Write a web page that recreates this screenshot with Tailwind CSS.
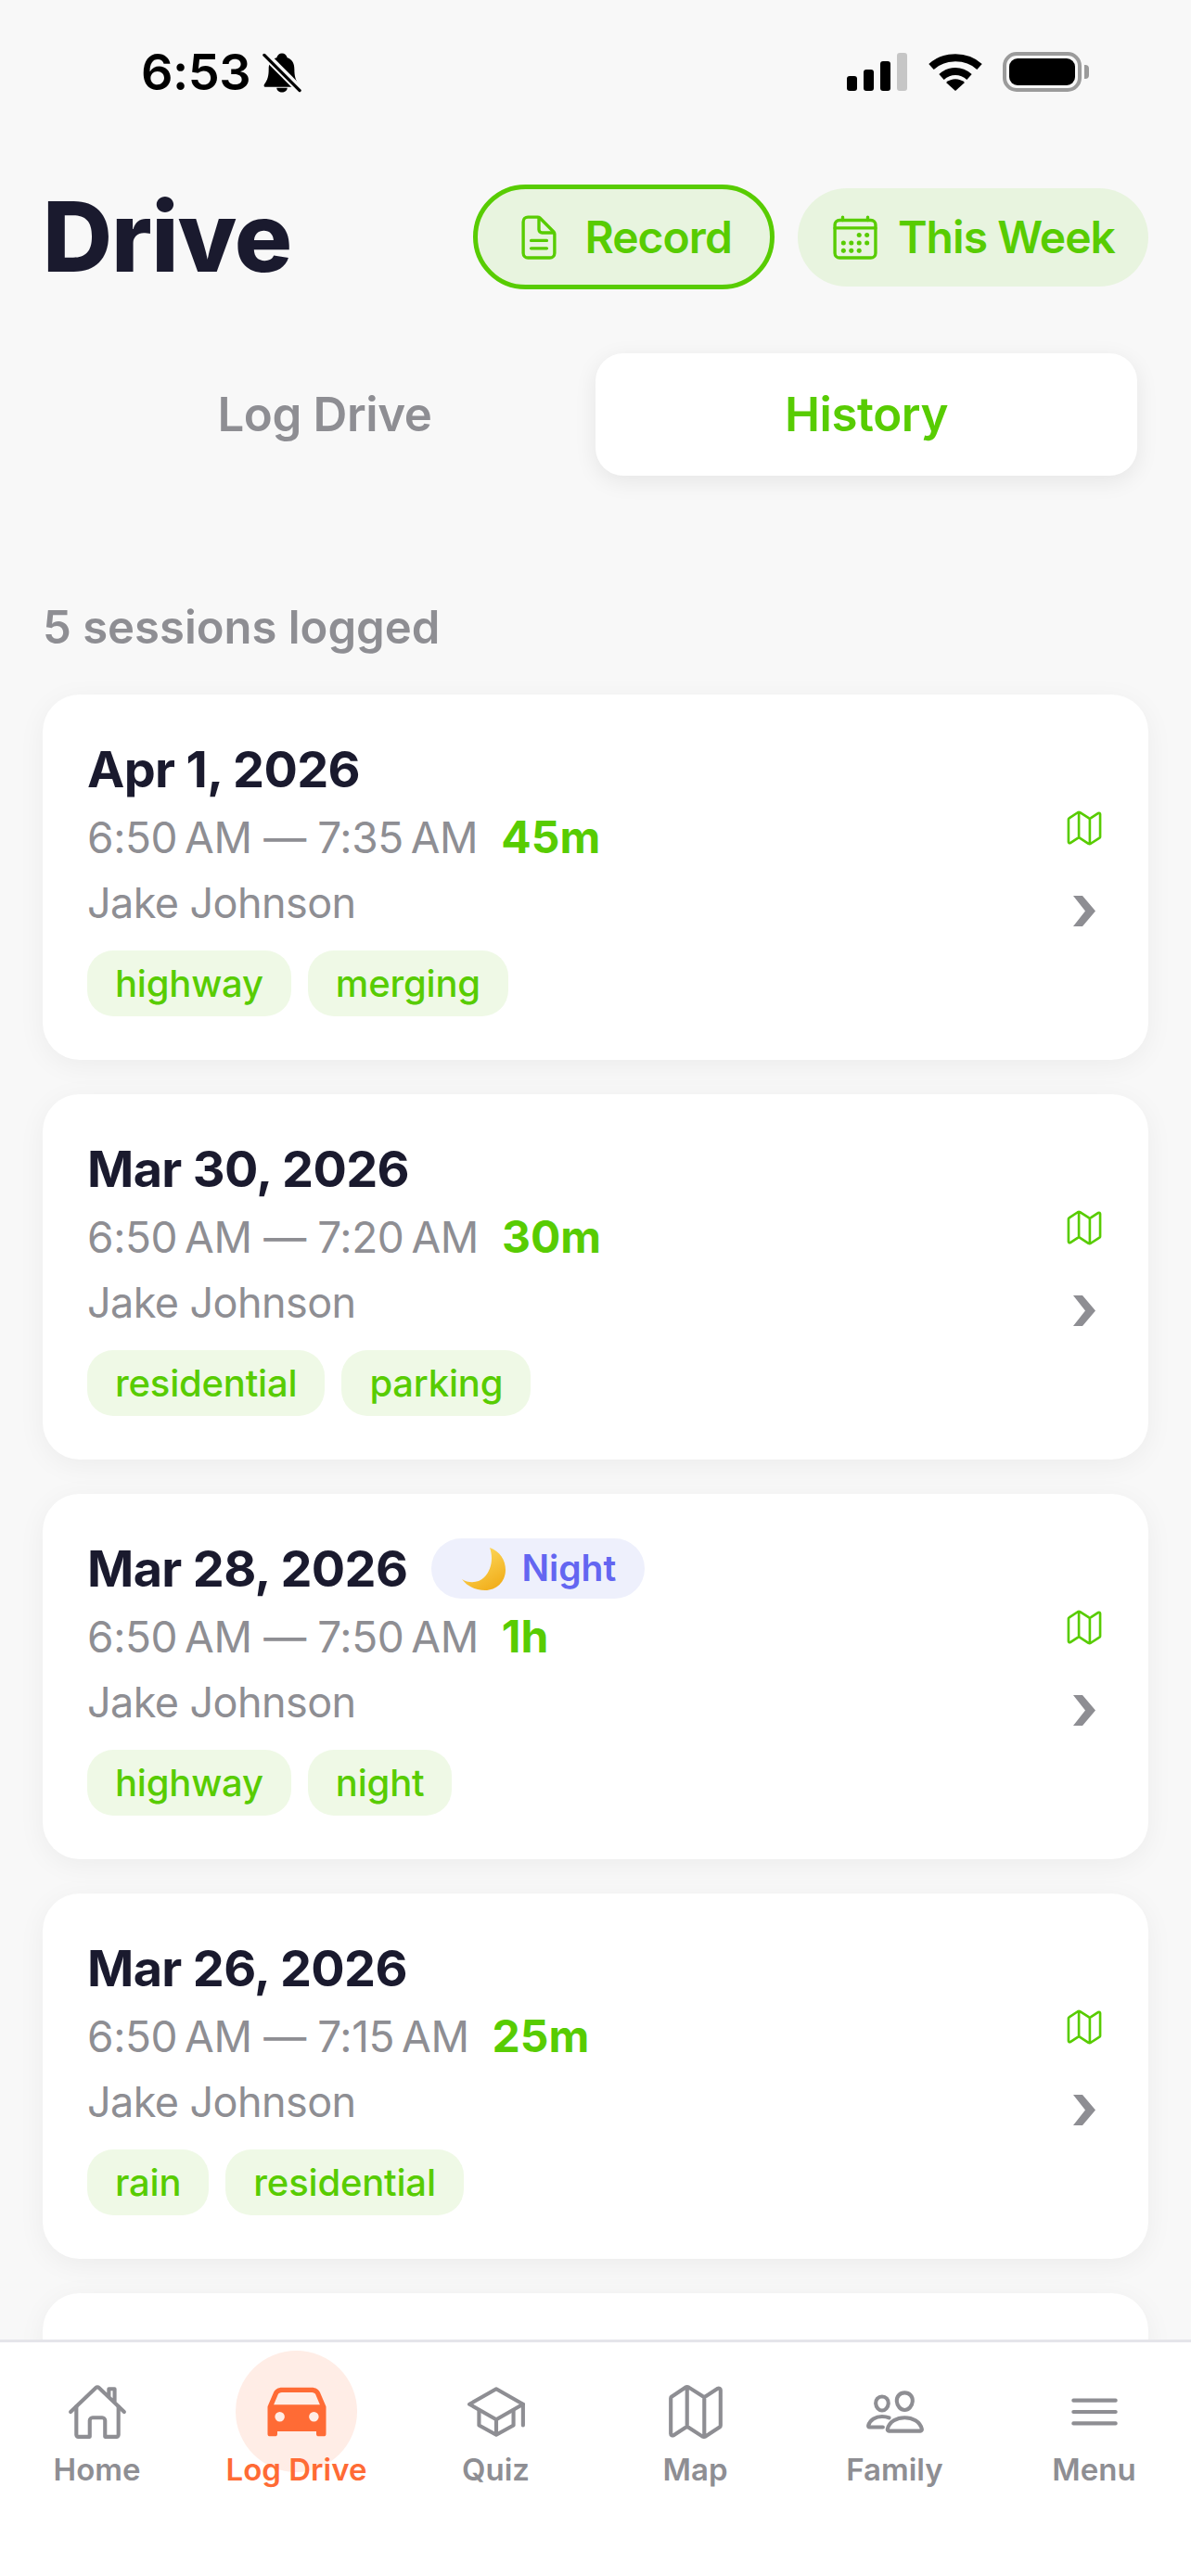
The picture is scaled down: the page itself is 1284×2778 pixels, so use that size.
<!DOCTYPE html>
<html lang="en">
<head>
<meta charset="UTF-8" />
<meta name="viewport" content="width=device-width, initial-scale=1.0" />
<title>Drive</title>
<script src="https://cdn.jsdelivr.net/npm/@tailwindcss/browser@4"></script>
</head>
<body class="bg-white font-['Inter',sans-serif]">

<!-- shared icons -->
<svg class="hidden">
  <symbol id="map" viewBox="0 0 512 512"><path d="M313.27 124.64L198.73 51.36a32 32 0 00-29.28.35L56.51 127.49A16 16 0 0048 141.63v295.8a16 16 0 0023.49 14.14l97.82-63.79a32 32 0 0129.5-.24l111.86 73a32 32 0 0029.27-.11l115.43-75.94a16 16 0 008.63-14.2V74.57a16 16 0 00-23.49-14.14l-98 63.86a32 32 0 01-29.24.35zM328 128v336M184 48v336" fill="none" stroke="currentColor" stroke-linecap="round" stroke-linejoin="round" stroke-width="32"/></symbol>
  <symbol id="chevron" viewBox="0 0 24 33"><path d="M0 0h10l14 16.500L10 33H0l13-16.500z" fill="currentColor"/></symbol>
</svg>

<div class="w-[1284px] h-[2778px] flex flex-col overflow-hidden bg-[#f8f8f8]">
  <div class="flex-1 min-h-0 overflow-hidden">

    <!-- status bar -->
    <div class="h-[199px] relative text-black">
      <div class="absolute left-[152px] top-[46px] flex items-center gap-[13px]">
        <span class="text-[54px] leading-[64px] font-semibold tracking-[-0.5px]">6:53</span>
        <svg class="w-[42px] h-[45px]" viewBox="0 0 44 46">
          <path d="M22 1c3 0 5 2 6 5 6 2 8 7 8 13 0 7 1 12 5 17 1 2 0 3-2 3H4c-2 0-3-1-2-3 4-5 5-10 5-17 0-6 2-11 9-13 1-3 3-5 6-5z" fill="#000"/>
          <path d="M16 40h12c0 3-3 5-6 5s-6-2-6-5z" fill="#000"/>
          <path d="M3 3l38 38" stroke="#f8f8f8" stroke-width="9"/>
          <path d="M2 3l40 40" stroke="#000" stroke-width="3.500" stroke-linecap="round"/>
        </svg>
      </div>
      <div class="absolute left-[913px] top-[56px] flex items-end gap-[7px] h-[42px]">
        <div class="w-[11px] h-[16px] rounded-[3px] bg-black"></div>
        <div class="w-[11px] h-[23px] rounded-[3px] bg-black"></div>
        <div class="w-[11px] h-[32px] rounded-[3px] bg-black"></div>
        <div class="w-[11px] h-[41px] rounded-[3px] bg-[#c6c6c6]"></div>
      </div>
      <svg class="absolute left-[1001px] top-[56px] w-[58px] h-[42px]" viewBox="0 0 58 42" fill="none">
        <path d="M3 16C17 3 41 3 55 16" stroke="#000" stroke-width="8"/>
        <path d="M14 27c9-8 21-8 30 0" stroke="#000" stroke-width="8"/>
        <path d="M19 33c6-5 14-5 20 0L29 42z" fill="#000"/>
      </svg>
      <div class="absolute left-[1081px] top-[56px] w-[85px] h-[43px] rounded-[15px] border-[4px] border-[#9b9b9b] p-[3px]">
        <div class="w-full h-full rounded-[9px] bg-black"></div>
      </div>
      <div class="absolute left-[1169px] top-[70px] w-[5px] h-[15px] rounded-r-[4px] bg-[#9b9b9b]"></div>
    </div>

    <!-- header -->
    <div class="h-[113px] pl-[46px] pr-[46px] flex items-center justify-between">
      <h1 class="text-[104px] leading-[113px] font-extrabold tracking-[-0.01em] text-[#1a1a2e]">Drive</h1>
      <div class="flex items-center gap-[25px]">
        <button class="h-[113px] pl-[39px] pr-[41px] flex items-center gap-[22px] rounded-full border-[5px] border-[#58cc02] bg-[#e8f4df] text-[#58cc02]">
          <svg class="w-[54px] h-[54px]" viewBox="0 0 512 512" fill="none" stroke="currentColor" stroke-width="32" stroke-linecap="round" stroke-linejoin="round">
            <path d="M416 221.25V416a48 48 0 01-48 48H144a48 48 0 01-48-48V96a48 48 0 0148-48h98.75a32 32 0 0122.62 9.37l141.26 141.26a32 32 0 019.37 22.62z"/>
            <path d="M256 56v120a32 32 0 0032 32h120M176 288h160M176 368h160"/>
          </svg>
          <span class="text-[48px] font-semibold tracking-[-0.02em]">Record</span>
        </button>
        <button class="h-[106px] pl-[35px] pr-[36px] flex items-center gap-[19px] rounded-full bg-[#e8f4df] text-[#58cc02]">
          <svg class="w-[54px] h-[54px]" viewBox="0 0 512 512" fill="none" stroke="currentColor" stroke-width="32" stroke-linecap="round" stroke-linejoin="round">
            <rect x="48" y="80" width="416" height="384" rx="48"/>
            <path d="M128 48v32M384 48v32M464 160H48"/>
            <g fill="currentColor" stroke="none">
              <circle cx="296" cy="232" r="24"/><circle cx="376" cy="232" r="24"/>
              <circle cx="136" cy="312" r="24"/><circle cx="216" cy="312" r="24"/><circle cx="296" cy="312" r="24"/><circle cx="376" cy="312" r="24"/>
              <circle cx="136" cy="392" r="24"/><circle cx="216" cy="392" r="24"/><circle cx="296" cy="392" r="24"/>
            </g>
          </svg>
          <span class="text-[48px] font-semibold tracking-[-0.02em]">This Week</span>
        </button>
      </div>
    </div>

    <!-- tabs -->
    <div class="mt-[69px] mx-[58px] grid grid-cols-2 h-[132px] text-[51px] font-semibold tracking-[-0.4px]">
      <div class="flex items-center justify-center text-[#8e8e93]">Log Drive</div>
      <div class="flex items-center justify-center rounded-[30px] bg-white text-[#58cc02] shadow-[0_6px_24px_rgba(0,0,0,0.08)]">History</div>
    </div>

    <p class="mt-[134px] mx-[46px] text-[49px] leading-[60px] font-semibold text-[#8e8e93]">5 sessions logged</p>

    <!-- sessions -->
    <div class="mt-[42px] mx-[46px] flex flex-col gap-[37px]">

      <div class="h-[394px] flex justify-between rounded-[40px] bg-white pl-[48px] pr-[48px] pt-[48px] shadow-[0_6px_30px_rgba(0,0,0,0.05)]">
        <div>
          <div class="h-[65px] flex items-center text-[54px] font-bold tracking-[-0.012em] text-[#1a1a2e]">Apr 1, 2026</div>
          <div class="h-[82px] flex items-center gap-[25px] text-[46px] text-[#8e8e93]"><span class="tracking-[-0.4px]">6:50&#8239;AM — 7:35&#8239;AM</span><span class="text-[48px] font-bold text-[#58cc02]">45m</span></div>
          <div class="h-[60px] flex items-center text-[45px] tracking-[-0.6px] text-[#8e8e93]">Jake Johnson</div>
          <div class="mt-[21px] flex gap-[18px] text-[40px] font-medium tracking-[-0.2px] text-[#58cc02]">
            <span class="h-[71px] px-[30px] flex items-center rounded-[28px] bg-[#eff9e6]">highway</span>
            <span class="h-[71px] px-[30px] flex items-center rounded-[28px] bg-[#eff9e6]">merging</span>
          </div>
        </div>
        <div class="pt-[75px] flex flex-col items-center gap-[52px]">
          <svg class="w-[42px] h-[42px] text-[#58cc02]"><use href="#map"/></svg>
          <svg class="w-[24px] h-[33px] text-[#8e8e93]"><use href="#chevron"/></svg>
        </div>
      </div>

      <div class="h-[394px] flex justify-between rounded-[40px] bg-white pl-[48px] pr-[48px] pt-[48px] shadow-[0_6px_30px_rgba(0,0,0,0.05)]">
        <div>
          <div class="h-[65px] flex items-center text-[54px] font-bold tracking-[-0.012em] text-[#1a1a2e]">Mar 30, 2026</div>
          <div class="h-[82px] flex items-center gap-[25px] text-[46px] text-[#8e8e93]"><span class="tracking-[-0.4px]">6:50&#8239;AM — 7:20&#8239;AM</span><span class="text-[48px] font-bold text-[#58cc02]">30m</span></div>
          <div class="h-[60px] flex items-center text-[45px] tracking-[-0.6px] text-[#8e8e93]">Jake Johnson</div>
          <div class="mt-[21px] flex gap-[18px] text-[40px] font-medium tracking-[-0.2px] text-[#58cc02]">
            <span class="h-[71px] px-[30px] flex items-center rounded-[28px] bg-[#eff9e6]">residential</span>
            <span class="h-[71px] px-[30px] flex items-center rounded-[28px] bg-[#eff9e6]">parking</span>
          </div>
        </div>
        <div class="pt-[75px] flex flex-col items-center gap-[52px]">
          <svg class="w-[42px] h-[42px] text-[#58cc02]"><use href="#map"/></svg>
          <svg class="w-[24px] h-[33px] text-[#8e8e93]"><use href="#chevron"/></svg>
        </div>
      </div>

      <div class="h-[394px] flex justify-between rounded-[40px] bg-white pl-[48px] pr-[48px] pt-[48px] shadow-[0_6px_30px_rgba(0,0,0,0.05)]">
        <div>
          <div class="h-[65px] flex items-center gap-[26px]">
            <span class="text-[54px] font-bold tracking-[-0.012em] text-[#1a1a2e]">Mar 28, 2026</span>
            <span class="h-[65px] pl-[33px] pr-[31px] flex items-center gap-[16px] rounded-full bg-[#eef0fc] text-[39px] font-semibold text-[#6366f1]">
              <svg class="w-[48px] h-[48px]" viewBox="0 0 48 48">
                <defs><linearGradient id="moon" x1="0" y1="0" x2="0.6" y2="1"><stop offset="0" stop-color="#ffe26a"/><stop offset="1" stop-color="#f2b01e"/></linearGradient></defs>
                <path d="M30 1c11 4 17 13 17 24 0 13-10 22-22 22C14 47 5 42 0 35c8 5 18 4 24-2 8-8 10-21 6-32z" fill="url(#moon)"/>
              </svg>
              Night
            </span>
          </div>
          <div class="h-[82px] flex items-center gap-[25px] text-[46px] text-[#8e8e93]"><span class="tracking-[-0.4px]">6:50&#8239;AM — 7:50&#8239;AM</span><span class="text-[48px] font-bold text-[#58cc02]">1h</span></div>
          <div class="h-[60px] flex items-center text-[45px] tracking-[-0.6px] text-[#8e8e93]">Jake Johnson</div>
          <div class="mt-[21px] flex gap-[18px] text-[40px] font-medium tracking-[-0.2px] text-[#58cc02]">
            <span class="h-[71px] px-[30px] flex items-center rounded-[28px] bg-[#eff9e6]">highway</span>
            <span class="h-[71px] px-[30px] flex items-center rounded-[28px] bg-[#eff9e6]">night</span>
          </div>
        </div>
        <div class="pt-[75px] flex flex-col items-center gap-[52px]">
          <svg class="w-[42px] h-[42px] text-[#58cc02]"><use href="#map"/></svg>
          <svg class="w-[24px] h-[33px] text-[#8e8e93]"><use href="#chevron"/></svg>
        </div>
      </div>

      <div class="h-[394px] flex justify-between rounded-[40px] bg-white pl-[48px] pr-[48px] pt-[48px] shadow-[0_6px_30px_rgba(0,0,0,0.05)]">
        <div>
          <div class="h-[65px] flex items-center text-[54px] font-bold tracking-[-0.012em] text-[#1a1a2e]">Mar 26, 2026</div>
          <div class="h-[82px] flex items-center gap-[25px] text-[46px] text-[#8e8e93]"><span class="tracking-[-0.4px]">6:50&#8239;AM — 7:15&#8239;AM</span><span class="text-[48px] font-bold text-[#58cc02]">25m</span></div>
          <div class="h-[60px] flex items-center text-[45px] tracking-[-0.6px] text-[#8e8e93]">Jake Johnson</div>
          <div class="mt-[21px] flex gap-[18px] text-[40px] font-medium tracking-[-0.2px] text-[#58cc02]">
            <span class="h-[71px] px-[30px] flex items-center rounded-[28px] bg-[#eff9e6]">rain</span>
            <span class="h-[71px] px-[30px] flex items-center rounded-[28px] bg-[#eff9e6]">residential</span>
          </div>
        </div>
        <div class="pt-[75px] flex flex-col items-center gap-[52px]">
          <svg class="w-[42px] h-[42px] text-[#58cc02]"><use href="#map"/></svg>
          <svg class="w-[24px] h-[33px] text-[#8e8e93]"><use href="#chevron"/></svg>
        </div>
      </div>

      <!-- fifth session, cut off by the tab bar -->
      <div class="h-[394px] rounded-[40px] bg-white shadow-[0_6px_30px_rgba(0,0,0,0.05)]"></div>
    </div>
  </div>

  <!-- tab bar -->
  <nav class="h-[255px] shrink-0 border-t-[3px] border-[#e5e5ea] bg-white overflow-hidden">
    <div class="relative w-[1290px] ml-[-3px] grid grid-cols-6 pt-[42px] text-[33px] leading-[40px] font-semibold text-[#8e8e93]">
      <a class="flex flex-col items-center gap-[9px]">
        <svg class="w-[66px] h-[66px]" viewBox="0 0 512 512" fill="none" stroke="currentColor" stroke-width="32" stroke-linecap="round" stroke-linejoin="round">
          <path d="M80 212v236a16 16 0 0016 16h96V328a24 24 0 0124-24h80a24 24 0 0124 24v136h96a16 16 0 0016-16V212"/>
          <path d="M480 256L266.890 52c-5-5.280-16.690-5.340-21.780 0L32 256M400 179V64h-48v69"/>
        </svg>
        <span>Home</span>
      </a>
      <a class="relative flex flex-col items-center gap-[9px] text-[#ff6b35]">
        <span class="absolute left-[42px] top-[-33px] w-[131px] h-[131px] rounded-full bg-[#ffede6]"></span>
        <svg class="relative w-[84px] h-[84px] my-[-9px]" viewBox="0 0 512 512" fill="currentColor">
          <path d="M447.680 220.780a16 16 0 00-1-3.080l-37.780-88.160C400.190 109.170 379 96 354.890 96H157.110c-24.090 0-45.300 13.170-54 33.540L65.290 217.700A15.720 15.720 0 0064 224v176a16 16 0 0016 16h32a16 16 0 0016-16v-16h256v16a16 16 0 0016 16h32a16 16 0 0016-16V224a16.150 16.150 0 00-.32-3.220zM144 320a32 32 0 1132-32 32 32 0 01-32 32zm224 0a32 32 0 1132-32 32 32 0 01-32 32zM104.260 208l28.230-65.850C136.110 133.690 146 128 157.110 128h197.780c11.100 0 21 5.690 24.620 14.150L407.740 208z"/>
        </svg>
        <span class="relative">Log Drive</span>
      </a>
      <a class="flex flex-col items-center gap-[9px]">
        <svg class="w-[66px] h-[66px]" viewBox="0 0 512 512" fill="none" stroke="currentColor" stroke-width="32" stroke-linecap="round" stroke-linejoin="round">
          <path d="M32 192L256 64l224 128-224 128L32 192z"/>
          <path d="M112 240v128l144 80 144-80V240M480 368V192M256 320v128"/>
        </svg>
        <span>Quiz</span>
      </a>
      <a class="flex flex-col items-center gap-[9px]">
        <svg class="w-[66px] h-[66px]"><use href="#map"/></svg>
        <span>Map</span>
      </a>
      <a class="flex flex-col items-center gap-[9px]">
        <svg class="w-[66px] h-[66px]" viewBox="0 0 512 512" fill="none" stroke="currentColor" stroke-width="32" stroke-linecap="round" stroke-linejoin="round">
          <path d="M402 168c-2.930 40.670-33.100 72-66 72s-63.120-31.320-66-72c-3-42.310 26.370-72 66-72s69 30.460 66 72z"/>
          <path d="M336 304c-65.170 0-127.840 32.370-143.540 95.410-2.080 8.340 3.150 16.590 11.720 16.590h263.650c8.570 0 13.770-8.250 11.720-16.590C463.850 336.360 401.180 304 336 304z"/>
          <path d="M200 185.940c-2.340 32.480-26.720 58.060-53 58.060s-50.700-25.570-53-58.060C91.610 152.150 115.340 128 147 128s55.390 24.770 53 57.940z"/>
          <path d="M206 306c-18.050-8.270-37.930-11.450-59-11.450-52 0-102.100 25.850-114.650 76.200-1.650 6.660 2.530 13.250 9.370 13.250H154"/>
        </svg>
        <span>Family</span>
      </a>
      <a class="flex flex-col items-center gap-[9px]">
        <svg class="w-[66px] h-[66px]" viewBox="0 0 512 512" fill="none" stroke="currentColor" stroke-width="32" stroke-linecap="round">
          <path d="M80 160h352M80 256h352M80 352h352"/>
        </svg>
        <span>Menu</span>
      </a>
    </div>
  </nav>
</div>
</body>
</html>
